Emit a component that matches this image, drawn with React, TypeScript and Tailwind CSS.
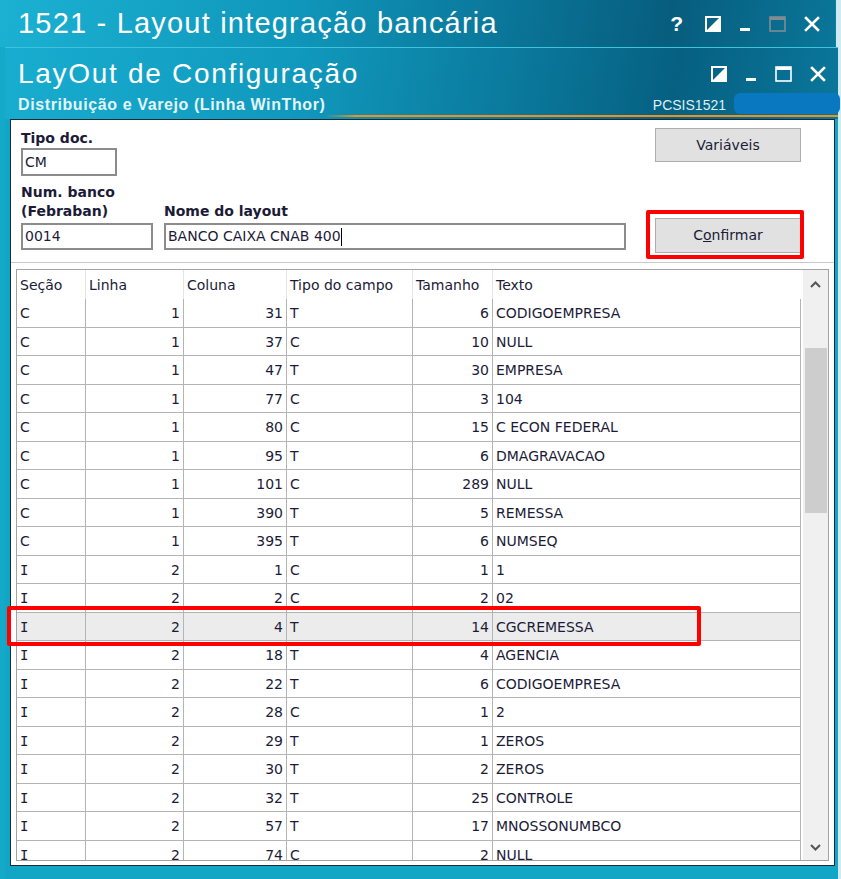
import React from "react";

const rows: [string, number, number, string, number, string][] = [
  ["C", 1, 31, "T", 6, "CODIGOEMPRESA"],
  ["C", 1, 37, "C", 10, "NULL"],
  ["C", 1, 47, "T", 30, "EMPRESA"],
  ["C", 1, 77, "C", 3, "104"],
  ["C", 1, 80, "C", 15, "C ECON FEDERAL"],
  ["C", 1, 95, "T", 6, "DMAGRAVACAO"],
  ["C", 1, 101, "C", 289, "NULL"],
  ["C", 1, 390, "T", 5, "REMESSA"],
  ["C", 1, 395, "T", 6, "NUMSEQ"],
  ["I", 2, 1, "C", 1, "1"],
  ["I", 2, 2, "C", 2, "02"],
  ["I", 2, 4, "T", 14, "CGCREMESSA"],
  ["I", 2, 18, "T", 4, "AGENCIA"],
  ["I", 2, 22, "T", 6, "CODIGOEMPRESA"],
  ["I", 2, 28, "C", 1, "2"],
  ["I", 2, 29, "T", 1, "ZEROS"],
  ["I", 2, 30, "T", 2, "ZEROS"],
  ["I", 2, 32, "T", 25, "CONTROLE"],
  ["I", 2, 57, "T", 17, "MNOSSONUMBCO"],
  ["I", 2, 74, "C", 2, "NULL"],
];

const SELECTED = 11;

const RestoreIcon = () => (
  <svg width="16" height="16" viewBox="0 0 16 16">
    <rect x="1" y="1" width="14" height="14" fill="none" stroke="white" strokeWidth="2" />
    <polygon points="15,1 15,15 1,15" fill="white" />
  </svg>
);

const MinIcon = () => (
  <svg width="12" height="16" viewBox="0 0 12 16">
    <rect x="1" y="12" width="10" height="3" fill="white" />
  </svg>
);

const MaxIcon = ({ color }: { color: string }) => (
  <svg width="17" height="16" viewBox="0 0 17 16">
    <rect x="1" y="1" width="15" height="14" fill="none" stroke={color} strokeWidth="1.6" />
    <rect x="1" y="1" width="15" height="3" fill={color} />
  </svg>
);

const CloseIcon = () => (
  <svg width="16" height="16" viewBox="0 0 16 16">
    <path d="M2 2 L14 14 M14 2 L2 14" stroke="white" strokeWidth="2.6" strokeLinecap="square" />
  </svg>
);

const Chevron = ({ up }: { up?: boolean }) => (
  <svg width="11" height="7" viewBox="0 0 11 7">
    <path d={up ? "M1 6 L5.5 1.5 L10 6" : "M1 1 L5.5 5.5 L10 1"} fill="none" stroke="#555" strokeWidth="2" />
  </svg>
);

const cols = [
  { w: "w-[69px]", align: "text-left" },
  { w: "w-[98px]", align: "text-right" },
  { w: "w-[103px]", align: "text-right" },
  { w: "w-[126px]", align: "text-left" },
  { w: "w-[80px]", align: "text-right" },
  { w: "w-[308px]", align: "text-left" },
];

const heads = ["Seção", "Linha", "Coluna", "Tipo do campo", "Tamanho", "Texto"];

export default function App() {
  return (
    <div className="w-[841px] h-[879px] relative overflow-hidden bg-[#cfeaf1] font-['Liberation_Sans',Arial,sans-serif]">
      {/* outer window */}
      <div className="w-[836px] h-[879px] flex flex-col bg-[#14a9c9] border-r border-[#0b7f9c]">
        <div className="h-[47px] shrink-0 flex items-center pl-[18px] pr-[15px] bg-[linear-gradient(100deg,#1bb1d2_0%,#0f97bb_35%,#0a7497_62%,#075d7e_80%,#0a7699_100%)]">
          <span className="text-white text-[29px] tracking-[1.2px] leading-none">1521 - Layout integração bancária</span>
          <div className="ml-auto flex items-center gap-[18px]">
            <span className="text-white font-bold text-[21px] leading-none mr-[4px]">?</span>
            <RestoreIcon />
            <MinIcon />
            <MaxIcon color="#7f8d93" />
            <CloseIcon />
          </div>
        </div>

        {/* inner window */}
        <div className="flex-1 flex flex-col ml-[5px] w-[833px] bg-[#12a6c6] border-t border-[#3ec3df]">
          <div className="h-[71px] shrink-0 flex flex-col bg-[linear-gradient(100deg,#18add0_0%,#1099bd_35%,#0a789b_62%,#066082_80%,#0a779b_100%)]">
            <div className="flex items-center pl-[13px] pr-[12px] pt-[12px]">
              <span className="text-white text-[28px] tracking-[1.7px] leading-none">LayOut de Configuração</span>
              <div className="ml-auto flex items-center gap-[18px]">
                <RestoreIcon />
                <MinIcon />
                <MaxIcon color="white" />
                <CloseIcon />
              </div>
            </div>
            <div className="flex items-end mt-[5px] pl-[13px]">
              <span className="text-[#e3f4f8] font-bold text-[16px] tracking-[0.6px] leading-[18px]">Distribuição e Varejo (Linha WinThor)</span>
              <span className="ml-auto text-[#dcf0f6] text-[14px] leading-[18px] mr-[8px]">PCSIS1521</span>
              <div className="w-[106px] h-[21px] rounded-md bg-[#0a78c0] mr-[-2px]" />
            </div>
            <div className="h-[2px] mt-[1px] ml-[320px] bg-[linear-gradient(90deg,rgba(240,144,28,0)_0%,#f0901c_6%,#f0901c_100%)]" />
          </div>

          {/* client panel */}
          <div className="w-[825px] ml-[5px] h-[747px] bg-white border border-[#1b2a33] flex flex-col font-['DejaVu_Sans',Verdana,sans-serif] text-[14px] text-[#1b1b38]">
            <div className="h-[142px] shrink-0 flex px-[10px]">
              <div className="flex-1 flex flex-col pt-[9px]">
                <span className="font-bold leading-[18px]">Tipo doc.</span>
                <div className="mt-[1px] w-[96px] h-[28px] border-2 border-[#8c8c8c] flex items-center px-[2px]">CM</div>
                <div className="flex mt-[7px] gap-[11px]">
                  <div className="flex flex-col">
                    <span className="font-bold leading-[18px]">Num. banco</span>
                    <span className="font-bold leading-[20px]">(Febraban)</span>
                    <div className="mt-[2px] w-[132px] h-[27px] border-2 border-[#8c8c8c] flex items-center px-[2px]">0014</div>
                  </div>
                  <div className="flex flex-col pt-[18px]">
                    <span className="font-bold leading-[20px]">Nome do layout</span>
                    <div className="mt-[2px] w-[462px] h-[27px] border-2 border-[#8c8c8c] flex items-center px-[2px]">
                      BANCO CAIXA CNAB 400<span className="w-px h-[18px] bg-black" />
                    </div>
                  </div>
                </div>
              </div>
              <div className="w-[146px] mr-[23px] flex flex-col pt-[8px]">
                <div className="h-[34px] bg-[#e1e1e1] border border-[#adadad] flex items-center justify-center">Variáveis</div>
                <div className="mt-[56px] h-[35px] bg-[#e1e1e1] border border-[#adadad] flex items-center justify-center">
                  C<span className="underline">o</span>nfirmar
                </div>
              </div>
            </div>
            <div className="h-px bg-[#c9c9c9]" />

            {/* grid */}
            <div className="mx-[5px] mt-[6px] h-[592px] border border-[#a3a3a3] flex overflow-hidden">
              <div className="w-[784px] flex flex-col">
                <div className="h-[29px] shrink-0 flex items-center">
                  {heads.map((h, i) => (
                    <div key={h} className={`${cols[i].w} h-full flex items-center pl-[3px] pt-[2px] ${i < 5 ? "border-r border-[#e4e4e4]" : ""}`}>
                      {h}
                    </div>
                  ))}
                </div>
                {rows.map((r, ri) => (
                  <div
                    key={ri}
                    className={`h-[28.5px] shrink-0 flex border-b border-[#b4b4b4] ${ri === SELECTED ? "bg-[#ececec]" : ""}`}
                  >
                    {r.map((v, ci) => (
                      <div
                        key={ci}
                        className={`${cols[ci].w} ${cols[ci].align} h-full flex items-center px-[3px] pt-[2px] border-r border-[#b4b4b4] ${cols[ci].align === "text-right" ? "justify-end" : ""} ${v === "I" ? "font-['DejaVu_Sans_Mono',monospace]" : ""}`}
                      >
                        {v}
                      </div>
                    ))}
                  </div>
                ))}
              </div>
              <div className="w-[26px] ml-[2px] bg-[#f0f0f0] flex flex-col items-center">
                <div className="h-[29px] flex items-center">
                  <Chevron up />
                </div>
                <div className="mt-[49px] w-[22px] h-[165px] bg-[#cdcdcd]" />
                <div className="mt-auto h-[26px] flex items-center">
                  <Chevron />
                </div>
              </div>
            </div>
          </div>
        </div>
      </div>

      {/* annotation frames */}
      <div className="absolute left-[646px] top-[210px] w-[158px] h-[49px] border-4 border-[#ff0000] rounded-[2px]" />
      <div className="absolute left-[7px] top-[606px] w-[694px] h-[40px] border-4 border-[#ff0000] rounded-[2px]" />
    </div>
  );
}
